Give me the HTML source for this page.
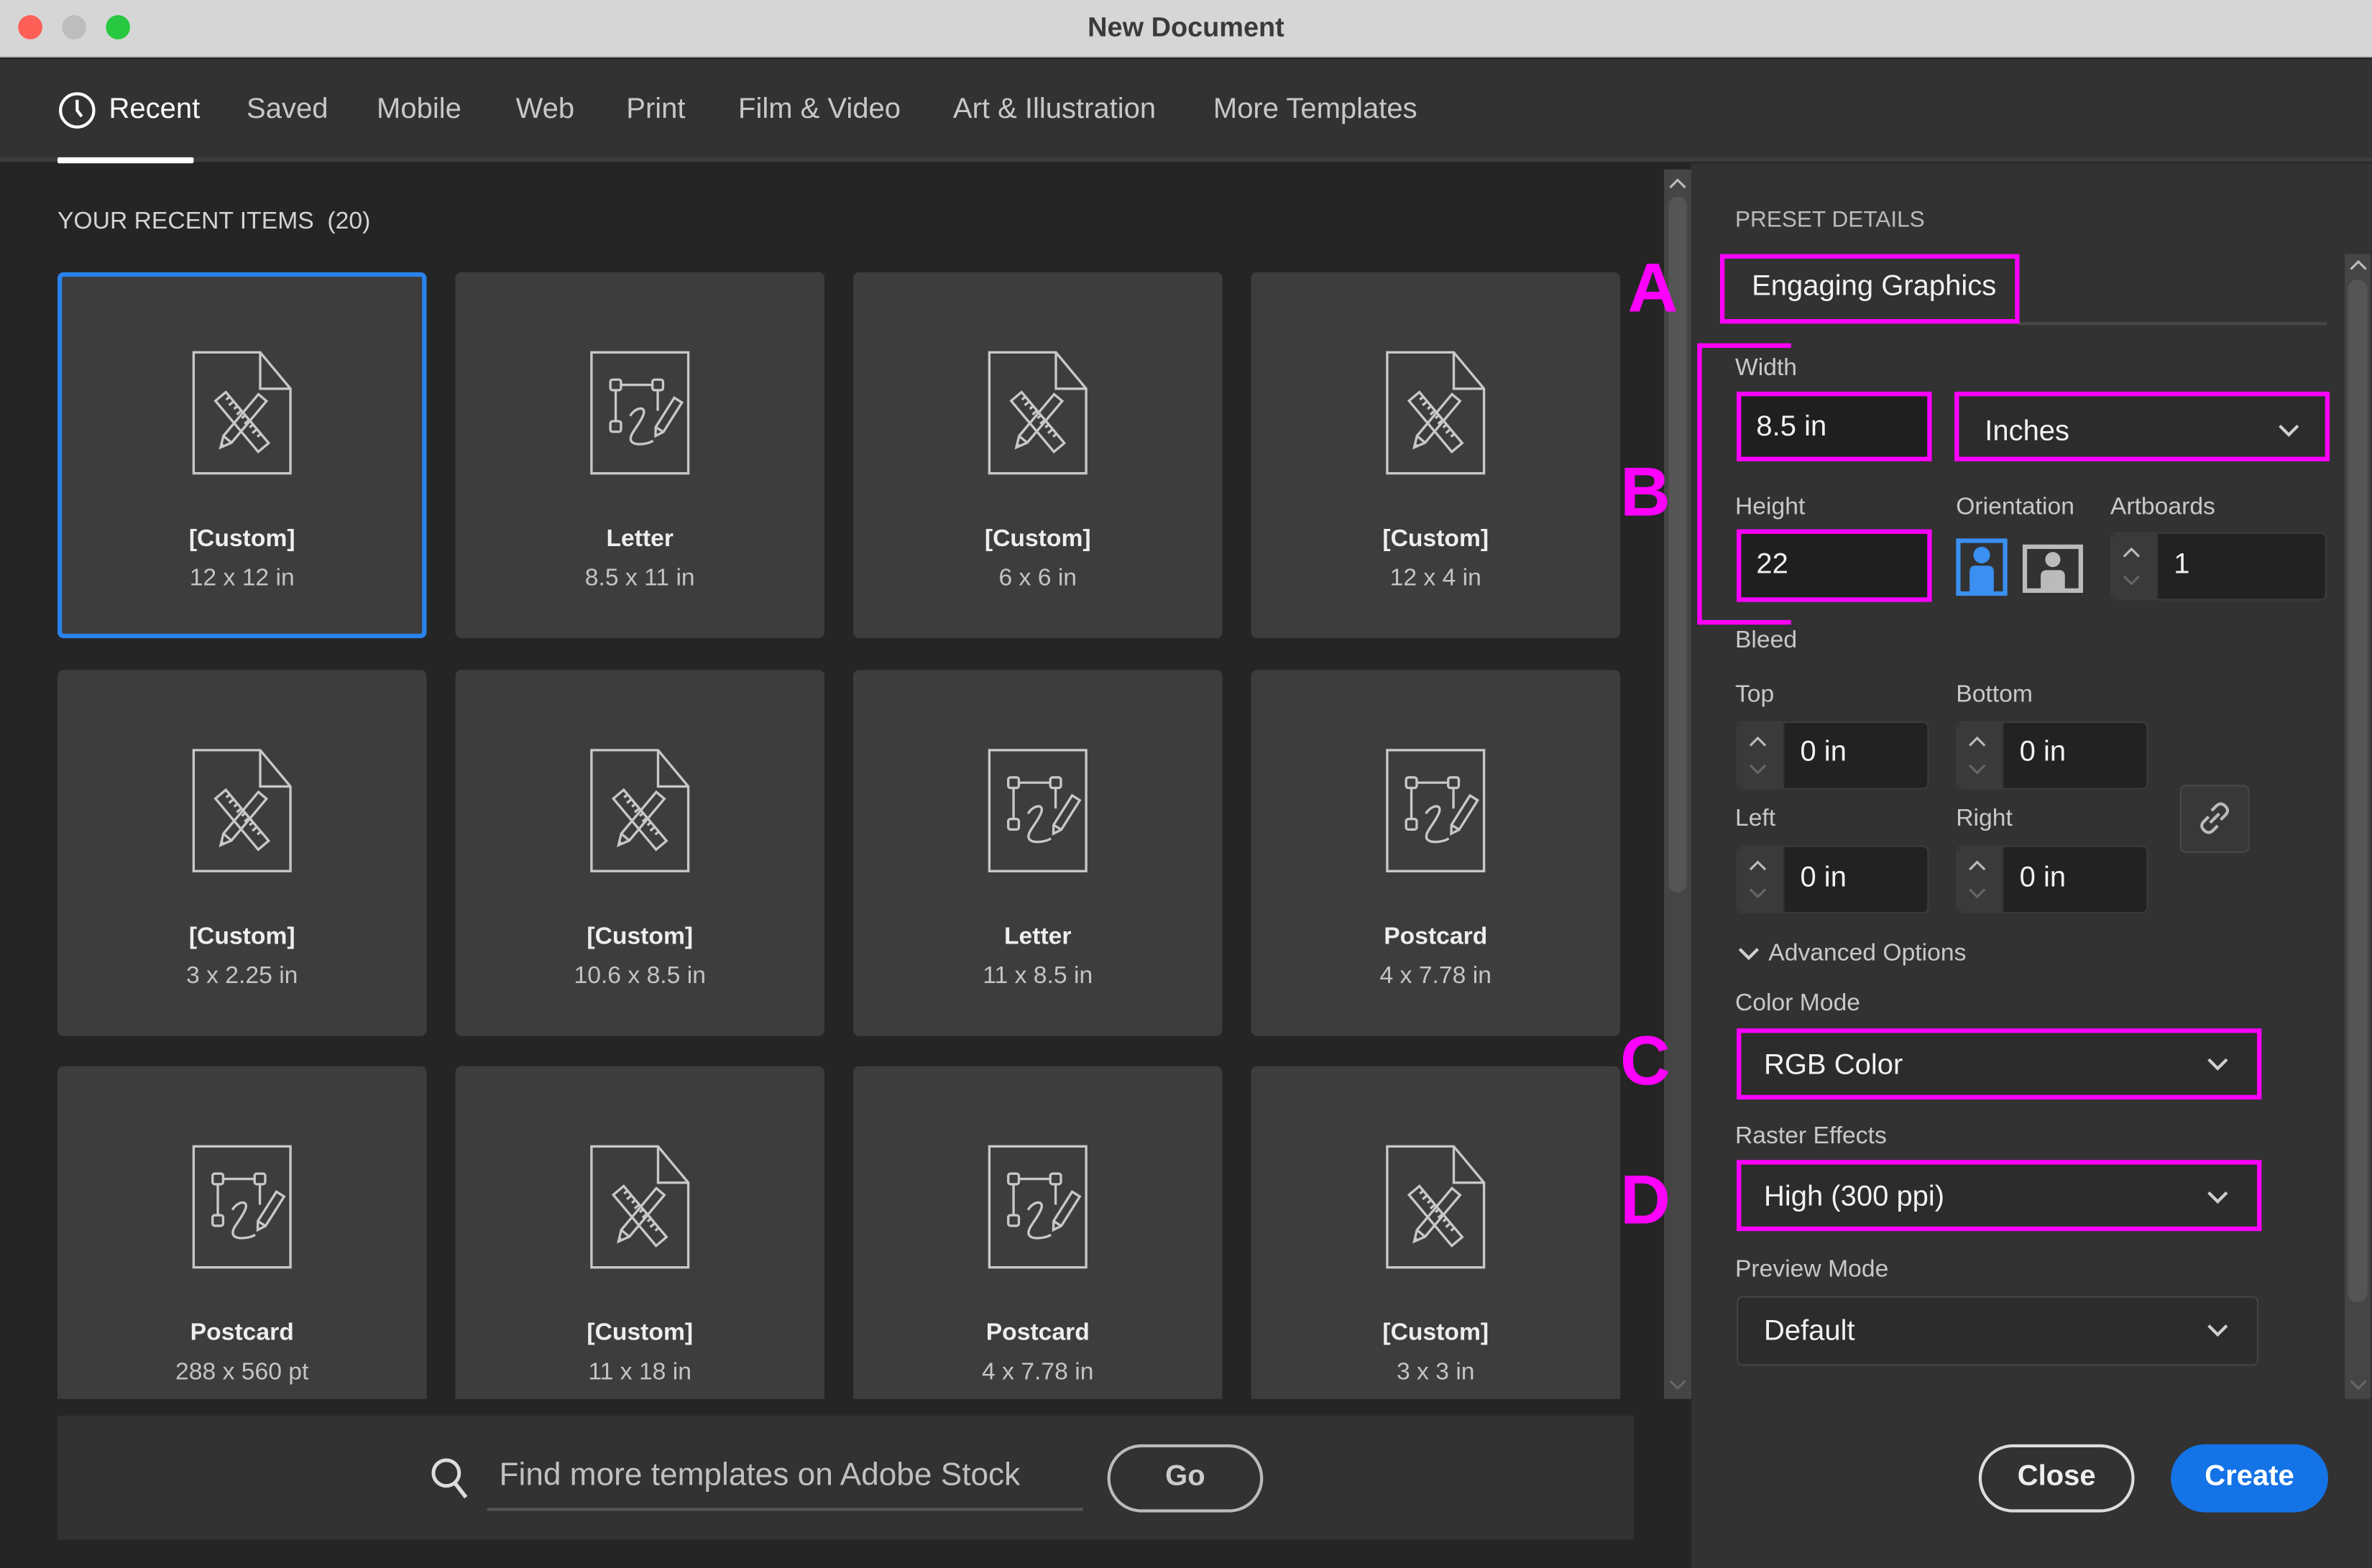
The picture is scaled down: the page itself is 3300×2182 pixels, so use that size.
<!DOCTYPE html>
<html><head><meta charset="utf-8"><style>
*{margin:0;padding:0;box-sizing:border-box}
html,body{width:3300px;height:2182px;overflow:hidden;background:#252525}
#s{position:absolute;left:0;top:0;width:1568px;height:1037px;transform:scale(2.10459);transform-origin:0 0;font-family:"Liberation Sans",sans-serif;background:#252525;overflow:hidden}
.a{position:absolute}
.t{position:absolute;white-space:nowrap;line-height:1}
.card{position:absolute;width:244px;background:#3d3d3d;border-radius:4px}
.lb{position:absolute;left:0;width:100%;text-align:center;font-size:16px;line-height:1;white-space:nowrap}
.ic{position:absolute;left:89px;top:52px;width:66px;height:82px}
.fld{position:absolute;background:#222;border-radius:4px}
.mg{position:absolute;border:3px solid #ff00ff}
.lab{position:absolute;font-size:16px;color:#c8c8c8;line-height:1;white-space:nowrap}
.stp{position:absolute;left:0;top:0;width:31px;height:100%;background:#3a3a3a;border-right:1px solid #2a2a2a;border-radius:4px 0 0 4px}
.big{position:absolute;font-size:46px;font-weight:bold;color:#ff00ff;line-height:1}
</style></head><body><div id="s">
<svg width="0" height="0" style="position:absolute">
<symbol id="cu" viewBox="0 0 66 82"><g fill="none" stroke="#c8c8c8" stroke-width="1.6"><path d="M1 1H45L65 25V81H1Z M45 1V25H65"/>
<g transform="translate(33,47) rotate(50)"><rect x="-22" y="-4.5" width="44" height="9"/><path d="M-18 -4.5v3M-14 -4.5v4M-10 -4.5v3M-6 -4.5v4M-2 -4.5v3M2 -4.5v4M6 -4.5v3M10 -4.5v4M14 -4.5v3"/></g>
<g transform="translate(33,47) rotate(-50)"><path d="M-15 -3.5H21V3.5H-15L-22 0Z M-15 -3.5V3.5 M-20 -1 V1"/></g></g></symbol>
<symbol id="pe" viewBox="0 0 66 82"><g fill="none" stroke="#c8c8c8" stroke-width="1.6"><rect x="1" y="1" width="64" height="80"/>
<rect x="13.5" y="19" width="7" height="7" rx="1.5"/><rect x="41.3" y="19" width="7" height="7" rx="1.5"/><path d="M20.5 22.5H41.3M17 26V46.5M44.8 26V39.6"/><rect x="13.5" y="46.5" width="7" height="7" rx="1.5"/>
<path d="M26.6 43C30 37 38 36 35 43C32 50 26 55 27 59C28 63 38 62 41.7 59.4"/>
<g transform="translate(50.8,44.4) rotate(-57.8)"><path d="M-9 -3H14V3H-9L-14 0Z M-9 -3V3"/></g></g></symbol>
<symbol id="chev" viewBox="0 0 14 8"><path d="M1 1L7 7L13 1" fill="none" stroke="#d0d0d0" stroke-width="2"/></symbol>
<symbol id="up" viewBox="0 0 12 7"><path d="M1 6L6 1L11 6" fill="none" stroke="#bbb" stroke-width="1.5"/></symbol>
<symbol id="dn" viewBox="0 0 12 7"><path d="M1 1L6 6L11 1" fill="none" stroke="#666" stroke-width="1.5"/></symbol>
</svg>

<div class="a" style="left:0;top:0;width:1568px;height:38px;background:#d6d6d6;border-bottom:1px solid #b8b8b8"></div>
<div class="a" style="left:12px;top:10px;width:16px;height:16px;border-radius:50%;background:#fe5f57"></div>
<div class="a" style="left:41px;top:10px;width:16px;height:16px;border-radius:50%;background:#bdbdbd"></div>
<div class="a" style="left:70px;top:10px;width:16px;height:16px;border-radius:50%;background:#28c840"></div>
<div class="t" style="left:0;width:1568px;text-align:center;top:9px;font-size:18px;font-weight:bold;color:#3a3a3a">New Document</div>

<div class="a" style="left:0;top:39px;width:1568px;height:68px;background:#323232;border-bottom:3px solid #3c3c3c"></div>
<svg class="a" style="left:38px;top:60px" width="26" height="26" viewBox="0 0 26 26"><circle cx="13" cy="13" r="11" fill="none" stroke="#fff" stroke-width="2"/><path d="M13 6V13L16 17" fill="none" stroke="#fff" stroke-width="2"/></svg>
<div class="t" style="left:72px;top:63px;font-size:19px;color:#fff">Recent</div>
<div class="t" style="left:163px;top:63px;font-size:19px;color:#c8c8c8">Saved</div>
<div class="t" style="left:249px;top:63px;font-size:19px;color:#c8c8c8">Mobile</div>
<div class="t" style="left:341px;top:63px;font-size:19px;color:#c8c8c8">Web</div>
<div class="t" style="left:414px;top:63px;font-size:19px;color:#c8c8c8">Print</div>
<div class="t" style="left:488px;top:63px;font-size:19px;color:#c8c8c8">Film &amp; Video</div>
<div class="t" style="left:630px;top:63px;font-size:19px;color:#c8c8c8">Art &amp; Illustration</div>
<div class="t" style="left:802px;top:63px;font-size:19px;color:#c8c8c8">More Templates</div>
<div class="a" style="left:38px;top:104px;width:90px;height:4px;background:#fff;border-radius:1px"></div>

<div class="t" style="left:38px;top:139px;font-size:16px;color:#d4d4d4">YOUR RECENT ITEMS&nbsp; (20)</div>

<div class="card" style="left:38px;top:180px;height:242px;border:3px solid #2a82ec"><svg class="ic" style="left:86px;top:49px"><use href="#cu"/></svg><div class="lb" style="top:166px;color:#eee;font-weight:bold">[Custom]</div><div class="lb" style="top:192px;color:#c4c4c4">12 x 12 in</div></div>
<div class="card" style="left:301px;top:180px;height:242px"><svg class="ic"><use href="#pe"/></svg><div class="lb" style="top:169px;color:#eee;font-weight:bold">Letter</div><div class="lb" style="top:195px;color:#c4c4c4">8.5 x 11 in</div></div>
<div class="card" style="left:564px;top:180px;height:242px"><svg class="ic"><use href="#cu"/></svg><div class="lb" style="top:169px;color:#eee;font-weight:bold">[Custom]</div><div class="lb" style="top:195px;color:#c4c4c4">6 x 6 in</div></div>
<div class="card" style="left:827px;top:180px;height:242px"><svg class="ic"><use href="#cu"/></svg><div class="lb" style="top:169px;color:#eee;font-weight:bold">[Custom]</div><div class="lb" style="top:195px;color:#c4c4c4">12 x 4 in</div></div>
<div class="card" style="left:38px;top:443px;height:242px"><svg class="ic"><use href="#cu"/></svg><div class="lb" style="top:169px;color:#eee;font-weight:bold">[Custom]</div><div class="lb" style="top:195px;color:#c4c4c4">3 x 2.25 in</div></div>
<div class="card" style="left:301px;top:443px;height:242px"><svg class="ic"><use href="#cu"/></svg><div class="lb" style="top:169px;color:#eee;font-weight:bold">[Custom]</div><div class="lb" style="top:195px;color:#c4c4c4">10.6 x 8.5 in</div></div>
<div class="card" style="left:564px;top:443px;height:242px"><svg class="ic"><use href="#pe"/></svg><div class="lb" style="top:169px;color:#eee;font-weight:bold">Letter</div><div class="lb" style="top:195px;color:#c4c4c4">11 x 8.5 in</div></div>
<div class="card" style="left:827px;top:443px;height:242px"><svg class="ic"><use href="#pe"/></svg><div class="lb" style="top:169px;color:#eee;font-weight:bold">Postcard</div><div class="lb" style="top:195px;color:#c4c4c4">4 x 7.78 in</div></div>
<div class="card" style="left:38px;top:705px;height:220px;border-radius:4px 4px 0 0"><svg class="ic"><use href="#pe"/></svg><div class="lb" style="top:169px;color:#eee;font-weight:bold">Postcard</div><div class="lb" style="top:195px;color:#c4c4c4">288 x 560 pt</div></div>
<div class="card" style="left:301px;top:705px;height:220px;border-radius:4px 4px 0 0"><svg class="ic"><use href="#cu"/></svg><div class="lb" style="top:169px;color:#eee;font-weight:bold">[Custom]</div><div class="lb" style="top:195px;color:#c4c4c4">11 x 18 in</div></div>
<div class="card" style="left:564px;top:705px;height:220px;border-radius:4px 4px 0 0"><svg class="ic"><use href="#pe"/></svg><div class="lb" style="top:169px;color:#eee;font-weight:bold">Postcard</div><div class="lb" style="top:195px;color:#c4c4c4">4 x 7.78 in</div></div>
<div class="card" style="left:827px;top:705px;height:220px;border-radius:4px 4px 0 0"><svg class="ic"><use href="#cu"/></svg><div class="lb" style="top:169px;color:#eee;font-weight:bold">[Custom]</div><div class="lb" style="top:195px;color:#c4c4c4">3 x 3 in</div></div>

<div class="a" style="left:1100px;top:112px;width:18px;height:813px;background:#454545"></div>
<div class="a" style="left:1103px;top:130px;width:12px;height:460px;background:#555;border-radius:6px"></div>
<svg class="a" style="left:1103px;top:118px" width="12" height="7"><use href="#up"/></svg>
<svg class="a" style="left:1103px;top:912px" width="12" height="7"><use href="#dn"/></svg>

<div class="a" style="left:38px;top:936px;width:1042px;height:82px;background:#323232"></div>
<svg class="a" style="left:284px;top:963px" width="28" height="30" viewBox="0 0 28 30"><circle cx="11" cy="11" r="8.5" fill="none" stroke="#ddd" stroke-width="2.4"/><path d="M17 18L24 27" stroke="#ddd" stroke-width="2.6"/></svg>
<div class="t" style="left:330px;top:965px;font-size:21px;color:#c0c0c0">Find more templates on Adobe Stock</div>
<div class="a" style="left:322px;top:997px;width:394px;height:2px;background:#555"></div>
<div class="a" style="left:732px;top:955px;width:103px;height:45px;border:2.5px solid #bbb;border-radius:23px"></div>
<div class="t" style="left:732px;width:103px;text-align:center;top:967px;font-size:19px;font-weight:bold;color:#ccc">Go</div>

<div class="a" style="left:1118px;top:108px;width:450px;height:929px;background:#323232"></div>
<div class="a" style="left:1550px;top:168px;width:17px;height:757px;background:#454545"></div>
<div class="a" style="left:1552px;top:185px;width:13px;height:676px;background:#555;border-radius:6px"></div>
<svg class="a" style="left:1553px;top:172px" width="12" height="7"><use href="#up"/></svg>
<svg class="a" style="left:1553px;top:912px" width="12" height="7"><use href="#dn"/></svg>

<div class="t" style="left:1147px;top:138px;font-size:15px;color:#bbb">PRESET DETAILS</div>
<div class="a" style="left:1334px;top:213px;width:204px;height:2px;background:#484848"></div>
<div class="mg" style="left:1137px;top:168px;width:198px;height:46px"></div>
<div class="t" style="left:1158px;top:180px;font-size:19px;color:#f2f2f2">Engaging Graphics</div>
<div class="big" style="left:1076px;top:167px">A</div>

<div class="a" style="left:1122px;top:227px;width:62px;height:3px;background:#ff00ff"></div>
<div class="a" style="left:1122px;top:227px;width:3px;height:186px;background:#ff00ff"></div>
<div class="a" style="left:1122px;top:410px;width:62px;height:3px;background:#ff00ff"></div>
<div class="big" style="left:1071px;top:302px">B</div>

<div class="lab" style="left:1147px;top:236px">Width</div>
<div class="fld" style="left:1148px;top:259px;width:128px;height:46px;background:#1f1f1f"></div>
<div class="mg" style="left:1148px;top:259px;width:129px;height:46px"></div>
<div class="t" style="left:1161px;top:273px;font-size:19px;color:#f2f2f2">8.5 in</div>
<div class="a" style="left:1292px;top:259px;width:248px;height:46px;background:#2c2c2c"></div>
<div class="mg" style="left:1292px;top:259px;width:248px;height:46px"></div>
<div class="t" style="left:1312px;top:276px;font-size:19px;color:#f2f2f2">Inches</div>
<svg class="a" style="left:1506px;top:280px" width="14" height="9"><use href="#chev"/></svg>

<div class="lab" style="left:1147px;top:328px">Height</div>
<div class="lab" style="left:1293px;top:328px">Orientation</div>
<div class="lab" style="left:1395px;top:328px">Artboards</div>
<div class="fld" style="left:1148px;top:350px;width:128px;height:48px;background:#1f1f1f;border:1px solid #2a7ee0"></div>
<div class="mg" style="left:1148px;top:350px;width:129px;height:48px"></div>
<div class="t" style="left:1161px;top:364px;font-size:19px;color:#f2f2f2">22</div>
<svg class="a" style="left:1293px;top:356px" width="34" height="38" viewBox="0 0 34 38"><rect x="1.5" y="1.5" width="31" height="35" fill="none" stroke="#3a8ff0" stroke-width="3"/><circle cx="17" cy="11" r="5.5" fill="#3a8ff0"/><path d="M9 37V22Q9 18 13 18H21Q25 18 25 22V37Z" fill="#3a8ff0"/></svg>
<svg class="a" style="left:1337px;top:360px" width="40" height="32" viewBox="0 0 40 32"><rect x="1.5" y="1.5" width="37" height="29" fill="none" stroke="#bbb" stroke-width="3"/><circle cx="20" cy="10" r="5" fill="#bbb"/><path d="M12 30V21Q12 17 16 17H24Q28 17 28 21V30Z" fill="#bbb"/></svg>
<div class="fld" style="left:1395px;top:352px;width:143px;height:45px;border:1px solid #3c3c3c"><div class="stp"></div></div>
<svg class="a" style="left:1403px;top:362px" width="12" height="7"><use href="#up"/></svg>
<svg class="a" style="left:1403px;top:380px" width="12" height="7"><use href="#dn"/></svg>
<div class="t" style="left:1437px;top:364px;font-size:19px;color:#f2f2f2">1</div>

<div class="lab" style="left:1147px;top:416px">Bleed</div>
<div class="lab" style="left:1147px;top:452px">Top</div>
<div class="lab" style="left:1293px;top:452px">Bottom</div>
<div class="lab" style="left:1147px;top:534px">Left</div>
<div class="lab" style="left:1293px;top:534px">Right</div>

<div class="fld" style="left:1148px;top:477px;width:127px;height:45px;border:1px solid #3c3c3c"><div class="stp"></div></div>
<div class="fld" style="left:1293px;top:477px;width:127px;height:45px;border:1px solid #3c3c3c"><div class="stp"></div></div>
<div class="fld" style="left:1148px;top:559px;width:127px;height:45px;border:1px solid #3c3c3c"><div class="stp"></div></div>
<div class="fld" style="left:1293px;top:559px;width:127px;height:45px;border:1px solid #3c3c3c"><div class="stp"></div></div>
<svg class="a" style="left:1156px;top:487px" width="12" height="7"><use href="#up"/></svg><svg class="a" style="left:1156px;top:505px" width="12" height="7"><use href="#dn"/></svg>
<svg class="a" style="left:1301px;top:487px" width="12" height="7"><use href="#up"/></svg><svg class="a" style="left:1301px;top:505px" width="12" height="7"><use href="#dn"/></svg>
<svg class="a" style="left:1156px;top:569px" width="12" height="7"><use href="#up"/></svg><svg class="a" style="left:1156px;top:587px" width="12" height="7"><use href="#dn"/></svg>
<svg class="a" style="left:1301px;top:569px" width="12" height="7"><use href="#up"/></svg><svg class="a" style="left:1301px;top:587px" width="12" height="7"><use href="#dn"/></svg>
<div class="t" style="left:1190px;top:488px;font-size:19px;color:#f2f2f2">0 in</div>
<div class="t" style="left:1335px;top:488px;font-size:19px;color:#f2f2f2">0 in</div>
<div class="t" style="left:1190px;top:571px;font-size:19px;color:#f2f2f2">0 in</div>
<div class="t" style="left:1335px;top:571px;font-size:19px;color:#f2f2f2">0 in</div>
<div class="a" style="left:1441px;top:519px;width:46px;height:45px;background:#383838;border:1px solid #474747;border-radius:4px"></div>
<svg class="a" style="left:1452px;top:529px" width="24" height="24" viewBox="0 0 24 24"><g fill="none" stroke="#bbb" stroke-width="2"><path d="M10 7L13 4Q16 1 19 4Q22 7 19 10L16 13"/><path d="M14 17L11 20Q8 23 5 20Q2 17 5 14L8 11"/><path d="M9 15L15 9"/></g></svg>

<svg class="a" style="left:1149px;top:626px" width="14" height="9"><use href="#chev"/></svg>
<div class="lab" style="left:1169px;top:623px;color:#c8c8c8">Advanced Options</div>

<div class="lab" style="left:1147px;top:656px">Color Mode</div>
<div class="a" style="left:1148px;top:680px;width:346px;height:47px;background:#2c2c2c"></div>
<div class="mg" style="left:1148px;top:680px;width:347px;height:47px"></div>
<div class="t" style="left:1166px;top:695px;font-size:19px;color:#f2f2f2">RGB Color</div>
<svg class="a" style="left:1459px;top:699px" width="14" height="9"><use href="#chev"/></svg>
<div class="big" style="left:1071px;top:678px">C</div>

<div class="lab" style="left:1147px;top:744px">Raster Effects</div>
<div class="a" style="left:1148px;top:767px;width:346px;height:47px;background:#2c2c2c"></div>
<div class="mg" style="left:1148px;top:767px;width:347px;height:47px"></div>
<div class="t" style="left:1166px;top:782px;font-size:19px;color:#f2f2f2">High (300 ppi)</div>
<div class="big" style="left:1071px;top:770px">D</div>
<svg class="a" style="left:1459px;top:787px" width="14" height="9"><use href="#chev"/></svg>

<div class="lab" style="left:1147px;top:832px">Preview Mode</div>
<div class="a" style="left:1148px;top:857px;width:345px;height:46px;background:#2c2c2c;border:1.5px solid #444;border-radius:4px"></div>
<div class="t" style="left:1166px;top:871px;font-size:19px;color:#f2f2f2">Default</div>
<svg class="a" style="left:1459px;top:875px" width="14" height="9"><use href="#chev"/></svg>

<div class="a" style="left:1308px;top:955px;width:103px;height:45px;border:2.5px solid #ddd;border-radius:23px"></div>
<div class="t" style="left:1308px;width:103px;text-align:center;top:967px;font-size:19px;font-weight:bold;color:#eee">Close</div>
<div class="a" style="left:1435px;top:955px;width:104px;height:45px;background:#1473e6;border-radius:23px"></div>
<div class="t" style="left:1435px;width:104px;text-align:center;top:967px;font-size:19px;font-weight:bold;color:#fff">Create</div>
</div></body></html>
